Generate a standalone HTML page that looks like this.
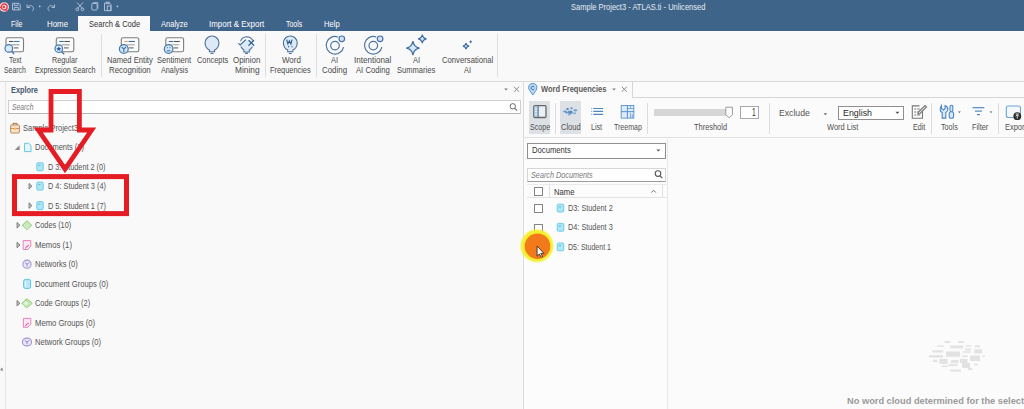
<!DOCTYPE html>
<html><head><meta charset="utf-8"><style>
html,body{margin:0;padding:0;}
body{width:1024px;height:409px;overflow:hidden;position:relative;background:#fbfbfb;font-family:"Liberation Sans",sans-serif;}
.t{position:absolute;white-space:nowrap;line-height:12px;height:12px;transform-origin:0 50%;}
svg{position:absolute;overflow:visible}
</style></head><body>
<div style="position:absolute;left:0px;top:0px;width:1024px;height:31px;background:#3f648a"></div>
<div style="position:absolute;left:78px;top:16px;width:72px;height:15px;background:#f9f9f9"></div>
<div style="position:absolute;left:0px;top:31px;width:1024px;height:50px;background:#f9f9f9"></div>
<div style="position:absolute;left:0px;top:81px;width:1024px;height:1px;background:#d9d9d9"></div>
<div style="position:absolute;left:101px;top:34px;width:1px;height:43px;background:#dedede"></div>
<div style="position:absolute;left:265px;top:34px;width:1px;height:43px;background:#dedede"></div>
<div style="position:absolute;left:316px;top:34px;width:1px;height:43px;background:#dedede"></div>
<div style="position:absolute;left:497px;top:34px;width:1px;height:43px;background:#dedede"></div>
<div style="position:absolute;left:0px;top:82px;width:523px;height:327px;background:#f9f9f9"></div>
<div style="position:absolute;left:524px;top:138px;width:143px;height:271px;background:#fcfcfc"></div>
<div style="position:absolute;left:5px;top:82px;width:1px;height:327px;background:#e4e4e4"></div>
<div style="position:absolute;left:8px;top:100px;width:513px;height:14px;background:#ffffff;border:1px solid #cfcfcf;border-bottom-color:#b5b5b5;box-sizing:border-box"></div>
<div style="position:absolute;left:523px;top:82px;width:1px;height:327px;background:#dcdcdc"></div>
<div style="position:absolute;left:632px;top:97px;width:392px;height:1px;background:#d6d6d6"></div>
<div style="position:absolute;left:524px;top:82px;width:108px;height:15px;background:#fafafa"></div>
<div style="position:absolute;left:632px;top:82px;width:1px;height:16px;background:#d6d6d6"></div>
<div style="position:absolute;left:524px;top:137px;width:500px;height:1px;background:#e0e0e0"></div>
<div style="position:absolute;left:529px;top:101px;width:21px;height:33px;background:#dde1e6"></div>
<div style="position:absolute;left:560px;top:101px;width:21px;height:33px;background:#dde1e6"></div>
<div style="position:absolute;left:555px;top:103px;width:1px;height:31px;background:#dcdcdc"></div>
<div style="position:absolute;left:647px;top:103px;width:1px;height:31px;background:#dcdcdc"></div>
<div style="position:absolute;left:769px;top:103px;width:1px;height:31px;background:#dcdcdc"></div>
<div style="position:absolute;left:931px;top:103px;width:1px;height:31px;background:#dcdcdc"></div>
<div style="position:absolute;left:998px;top:103px;width:1px;height:31px;background:#dcdcdc"></div>
<div style="position:absolute;left:654px;top:109px;width:73px;height:7px;background:#d6d6d6"></div>
<div style="position:absolute;left:740px;top:106px;width:19px;height:13px;background:#ffffff;border:1px solid #a9a9a9;box-sizing:border-box"></div>
<div style="position:absolute;left:838px;top:106px;width:66px;height:14px;background:#ffffff;border:1px solid #8f8f8f;box-sizing:border-box"></div>
<div style="position:absolute;left:667px;top:139px;width:1px;height:270px;background:#e8e8e8"></div>
<div style="position:absolute;left:527px;top:143px;width:139px;height:16px;background:#ffffff;border:1px solid #8f8f8f;box-sizing:border-box"></div>
<div style="position:absolute;left:527px;top:168px;width:139px;height:14px;background:#ffffff;border:1px solid #d6d6d6;border-bottom-color:#9d9d9d;box-sizing:border-box"></div>
<div style="position:absolute;left:527px;top:197px;width:140px;height:1px;background:#e3e3e3"></div>
<div style="position:absolute;left:527px;top:184px;width:140px;height:1px;background:#ebebeb"></div>
<div style="position:absolute;left:549px;top:185px;width:1px;height:12px;background:#e0e0e0"></div>
<div style="position:absolute;left:662px;top:185px;width:1px;height:12px;background:#e0e0e0"></div>
<div style="position:absolute;left:534px;top:187px;width:9px;height:9px;border:1px solid #858585;box-sizing:border-box;background:#fff"></div>
<div style="position:absolute;left:534px;top:204px;width:9px;height:9px;border:1px solid #858585;box-sizing:border-box;background:#fff"></div>
<div style="position:absolute;left:534px;top:224px;width:9px;height:9px;border:1px solid #858585;box-sizing:border-box;background:#fff"></div>
<div style="position:absolute;left:534px;top:243px;width:9px;height:9px;border:1px solid #858585;box-sizing:border-box;background:#fff"></div>
<svg width="1024" height="409" viewBox="0 0 1024 409" style="left:0;top:0">
<!-- ===== title bar quick access ===== -->
<g id="qat">
  <circle cx="4.2" cy="7" r="4.8" fill="#f4d3d8"/>
  <circle cx="4.2" cy="7" r="3" fill="none" stroke="#e4424e" stroke-width="1.3"/>
  <circle cx="3.8" cy="7" r="1.3" fill="#e4424e"/>
  <path d="M0 7.3h1.5M5.8 9.5l1.8 1.8" stroke="#e4424e" stroke-width="1.2"/>
  <g fill="none" stroke="#a9bed6" stroke-width="1">
    <path d="M12.5 3.3h6.5l1.2 1.2v5.4h-7.7z"/>
    <path d="M14.3 3.3v2.3h3.6v-2.3M14.3 9.9v-2.4h4v2.4"/>
    <path d="M27 4.5v3h3" />
    <path d="M27.3 7.3c1.5-2 4.5-2.3 5.8-0.2c0.9 1.5 0.2 3.2-1.2 4"/>
    <path d="M54.5 4.5v3h-3"/>
    <path d="M54.2 7.3c-1.5-2-4.5-2.3-5.8-0.2c-0.9 1.5-0.2 3.2 1.2 4"/>
    <path d="M77 2.5l5.5 6M83 2.5l-5.5 6"/>
    <circle cx="77.3" cy="9.3" r="1.4"/>
    <circle cx="82.5" cy="9.3" r="1.4"/>
    <rect x="91.8" y="3.5" width="5.3" height="6.5" rx="0.6"/>
    <path d="M93.2 3.5v-0.8h4.6v6"/>
    <path d="M106 3h-1.5v7.7h6.5v-6.2l-1.5-1.5h-1.2"/>
    <rect x="106.5" y="2.2" width="2.5" height="1.5"/>
    <rect x="107.3" y="6" width="3.6" height="4.4"/>
  </g>
  <circle cx="39.7" cy="6.3" r="0.9" fill="#b7c9de"/>
  <circle cx="117.4" cy="6.3" r="0.9" fill="#b7c9de"/>
</g>

<!-- ===== ribbon icons ===== -->
<g id="ribbon">
  <!-- doc icons -->
  <g fill="#fbfbfb" stroke="#7d7d7d" stroke-width="1.1">
    <rect x="6" y="37.7" width="17.5" height="14" rx="1.8"/>
    <rect x="56.3" y="37.7" width="17.5" height="14" rx="1.8"/>
    <rect x="121.3" y="37.7" width="17.5" height="14" rx="1.8"/>
    <rect x="165.8" y="37.7" width="17.8" height="14" rx="1.8"/>
  </g>
  <g stroke-width="1.1">
    <path d="M9 41.5h4.5" stroke="#555"/><path d="M14 41.5h5.6" stroke="#3c7fc0"/>
    <path d="M11.5 44.8h8" stroke="#9a9a9a"/><path d="M13.8 47.9h4.7" stroke="#666"/>
    <path d="M59.3 41.5h4.5" stroke="#3c6fa8"/><path d="M64.3 41.5h5.6" stroke="#555"/>
    <path d="M61.8 44.8h8" stroke="#9a9a9a"/><path d="M64 47.9h4.7" stroke="#666"/>
    <path d="M124.3 41.5h3.5" stroke="#e0a070"/><path d="M128.5 41.5h6.4" stroke="#3c6fa8"/>
    <path d="M126.8 44.8h8" stroke="#b0a0a0"/><path d="M129 47.9h4.7" stroke="#666"/>
    <path d="M168.8 41.5h4.5" stroke="#3c6fa8"/><path d="M173.8 41.5h6" stroke="#555"/>
    <path d="M171.3 44.8h8" stroke="#9ab09a"/><path d="M173.5 47.9h4.7" stroke="#666"/>
  </g>
  <!-- magnifiers -->
  <g stroke="#4a79ad" stroke-width="1.2">
    <circle cx="8.8" cy="48.4" r="3.8" fill="#d8eaf9"/>
    <path d="M11.5 51.3l2.7 2.8" stroke-width="1.4"/>
    <circle cx="58.8" cy="48.7" r="3.8" fill="#d8eaf9"/>
    <path d="M61.5 51.6l2.7 2.7" stroke-width="1.4"/>
    <circle cx="123.8" cy="49" r="4.4" fill="#d2e6f8"/>
    <path d="M121.6 47l2.2 2v3M126 47l-2.2 2" fill="none"/>
    <circle cx="168.6" cy="49" r="4.3" fill="#d2e6f8"/>
    <path d="M166.8 50.8h3.6" fill="none"/>
  </g>
  <path d="M58.8 46.3l0.8 1.6 1.7 0.2-1.3 1.2 0.4 1.7-1.6-0.9-1.6 0.9 0.4-1.7-1.3-1.2 1.7-0.2z" fill="#2e5f96"/>
  <g fill="#4a79ad"><circle cx="167.3" cy="47.7" r="0.6"/><circle cx="169.9" cy="47.7" r="0.6"/></g>
  <!-- bulbs -->
  <g fill="#dceaf7" stroke="#4d6f98" stroke-width="1.1">
    <path d="M209.4 51.8v-1.8c-2.6-1.4-4.3-4-4.3-7.1c0-3.9 3.1-6.9 6.9-6.9s6.9 3 6.9 6.9c0 3.1-1.7 5.7-4.3 7.1v1.8z"/>
    <path d="M243.9 52v-2c-1.6-0.9-2.8-2.2-3.4-3.6l1.5-2.6 4.5-4.3 3.2 0.4 3.9 3.6 0.6 1.8c-0.6 2-1.9 3.6-3.6 4.7v2z" stroke="none"/>
    <path d="M240.5 41.2a6.7 6.7 0 0 1 12.3 -0.6" fill="none" stroke="#5a7ea6"/>
    <path d="M240.9 46.6c0.7 1.5 1.7 2.6 3 3.4v2h5.4v-2c1.4-0.9 2.4-2 3-3.4" fill="none"/>
    <path d="M287.7 51.8v-1.8c-2.6-1.4-4.3-4-4.3-7.1c0-3.9 3.1-6.9 6.9-6.9s6.9 3 6.9 6.9c0 3.1-1.7 5.7-4.3 7.1v1.8z"/>
  </g>
  <g stroke="#4d6f98" stroke-width="1.1" fill="none">
    <path d="M210.5 53.4h3"/><path d="M245 53.4h3"/><path d="M288.8 53.4h3"/>
    <path d="M238.4 43.4l1.8 1.6 5.6-5.4" stroke="#41688f" stroke-width="1.2"/>
    <path d="M248.6 40.2l5.6 5.4M254 40.2l-5.6 5.4" stroke="#2f5f90" stroke-width="1.3"/>
    <path d="M286.7 39.6l1.2 4.4 1.5-3.2 1.5 3.2 1.2-4.4" stroke="#2f5a88" stroke-width="1.1"/>
    <path d="M288.6 45.8v1.6M292 45.8v1.6" stroke="#2f5a88" stroke-width="0.9"/>
  </g>
  <!-- AI coding -->
  <g fill="none" stroke="#4d74a0" stroke-width="1.2">
    <path d="M343.6 47.2a8.8 8.8 0 1 1 -5.6 -10.2"/>
    <circle cx="335" cy="45.6" r="4.3"/>
    <circle cx="341.8" cy="38.8" r="2.8" fill="#cfe4f8"/>
    <path d="M381.9 47.2a8.8 8.8 0 1 1 -5.6 -10.2"/>
    <circle cx="373.3" cy="45.6" r="4.3"/>
    <circle cx="380.1" cy="38.8" r="2.8" fill="#cfe4f8"/>
  </g>
  <!-- stars -->
  <g fill="#d6e9f9" stroke="#3f6d9f" stroke-width="1.2">
    <path d="M412.9 41.2q0.9 6 6.6 6.9q-5.7 0.9 -6.6 7q-0.9 -6.1 -6.6 -7q5.7 -0.9 6.6 -6.9z"/>
    <path d="M422.3 34.6q0.6 3.6 4.2 4.2q-3.6 0.6 -4.2 4.3q-0.6 -3.7 -4.2 -4.3q3.6 -0.6 4.2 -4.2z"/>
    <path d="M466 43q0.4 2.7 3.1 3.1q-2.7 0.4 -3.1 3.1q-0.4 -2.7 -3.1 -3.1q2.7 -0.4 3.1 -3.1z"/>
  </g>
  <path d="M470.7 40.3l1.4 1.5-1.4 1.5-1.4-1.5z" fill="#3f6d9f"/>
</g>

<!-- ===== left panel ===== -->
<g id="left">
  <path d="M504.2 88.5h3.6l-1.8 2z" fill="#777"/>
  <path d="M514 86.8l5 5M519 86.8l-5 5" stroke="#8a8a8a" stroke-width="1"/>
  <circle cx="512.8" cy="106.3" r="2.7" fill="none" stroke="#6a6a6a" stroke-width="1"/>
  <path d="M514.8 108.3l2.3 2.3" stroke="#6a6a6a" stroke-width="1.1"/>
  <!-- project icon -->
  <g>
    <rect x="10.6" y="125" width="8.8" height="8" rx="1" fill="#f6e3c8" stroke="#c08a5a" stroke-width="1"/>
    <path d="M13 125v-1.6h4v1.6" fill="none" stroke="#a86e45" stroke-width="1"/>
    <path d="M10.8 128.5h8.4" stroke="#d98a80" stroke-width="1"/>
    <rect x="13.9" y="127.8" width="2.2" height="2" fill="#e7c040"/>
  </g>
  <!-- expand triangles -->
  <path d="M19.6 145.3v4.8h-4.8z" fill="#8a8a8a"/>
  <g fill="#bdbdbd" stroke="#6e6e6e" stroke-width="0.8" stroke-linejoin="round">
    <path d="M29 183.4l3 2.8-3 2.8z"/>
    <path d="M29 202.8l3 2.8-3 2.8z"/>
    <path d="M17 222.5l3 2.8-3 2.8z"/>
    <path d="M17 242.2l3 2.8-3 2.8z"/>
    <path d="M17 300.4l3 2.8-3 2.8z"/>
  </g>
  <!-- documents folder icon -->
  <path d="M24.5 143.3h4.2l2.3 2.3v6h-6.5z" fill="#e4f6fb" stroke="#6cc8e4" stroke-width="1"/>
  <!-- doc icons -->
  <g fill="#ade6f5" stroke="#62c8e6" stroke-width="0.9">
    <rect x="36.8" y="162.8" width="6.4" height="8" rx="1.2"/>
    <rect x="36.8" y="182.1" width="6.4" height="8" rx="1.2"/>
    <rect x="36.8" y="201.6" width="6.4" height="8" rx="1.2"/>
  </g>
  <g stroke="#4a9fc0" stroke-width="0.7"><path d="M38.3 165.3h2.2M38.3 184.6h2.2M38.3 204.1h2.2"/></g>
  <!-- codes -->
  <path d="M27 221l4.5 4.3-4.5 4.3-4.5-4.3z" fill="#e3f3da" stroke="#9dd287" stroke-width="1.1"/>
  <path d="M27 223.5l1.8 1.8-1.8 1.8-1.8-1.8z" fill="none" stroke="#a7d58f" stroke-width="0.8"/>
  <!-- memos -->
  <path d="M23.2 240.6h7.6v5.6l-3 3.3h-4.6z" fill="#fce6f2" stroke="#e585bd" stroke-width="1"/>
  <path d="M25.5 248.5q0.5-2.8 3.5-3" fill="none" stroke="#c8408a" stroke-width="0.9"/>
  <!-- networks -->
  <circle cx="27" cy="264.2" r="4.1" fill="#ebe6f8" stroke="#a294d4" stroke-width="1.1"/>
  <path d="M25 262.5l2 1.7 2.2-1.5M27 264.2v2.2" fill="none" stroke="#8f7fc6" stroke-width="0.9"/>
  <!-- document groups -->
  <rect x="23.6" y="279.3" width="7" height="9.2" rx="2" fill="#b8e6f6" stroke="#5cc4e6" stroke-width="1"/><path d="M25.6 281.5v5" stroke="#e8f8fd" stroke-width="1"/>
  <!-- code groups -->
  <path d="M27 299l5 4.3-5 4.3-5-4.3z" fill="#e3f3da" stroke="#9dd287" stroke-width="1.1"/>
  <path d="M24.6 299l5 4.3-5 4.3" fill="none" stroke="#a7d58f" stroke-width="0.9"/>
  <!-- memo groups -->
  <path d="M23.4 318.4h7.4v5.6l-3 3.3h-4.4z" fill="#fce6f2" stroke="#e585bd" stroke-width="1"/>
  <path d="M25.5 326.2q0.5-2.6 3.3-2.8" fill="none" stroke="#c8408a" stroke-width="0.9"/>
  <!-- network groups -->
  <ellipse cx="27" cy="342" rx="4.6" ry="3.9" fill="#ebe6f8" stroke="#a294d4" stroke-width="1.1"/>
  <path d="M24.8 340.5l2.2 1.5 2.3-1.5M27 342v2.3" fill="none" stroke="#8f7fc6" stroke-width="0.9"/>
  <!-- collapsed side arrow -->
  <path d="M2.6 367.4v4.2l-2.6-2.1z" fill="#8a8a8a"/>
</g>

<!-- ===== right panel ===== -->
<g id="right">
  <!-- pin -->
  <path d="M532.8 95l-3.2-4.6c-0.6-0.9-0.9-1.8-0.9-2.8a4.1 4.1 0 0 1 8.2 0c0 1-0.3 1.9-0.9 2.8z" fill="#b9d8f2" stroke="#5b93cb" stroke-width="1"/>
  <path d="M534.3 87.2a1.7 1.7 0 1 0 0 1.6" fill="none" stroke="#3f78b5" stroke-width="1"/>
  <path d="M612.2 88.6h3.6l-1.8 2z" fill="#7a7a7a"/>
  <path d="M621.8 86.8l5 5M626.8 86.8l-5 5" stroke="#8a8a8a" stroke-width="1"/>
  <!-- scope -->
  <rect x="533.8" y="105.7" width="12.2" height="11.8" rx="1" fill="#e9f1f8" stroke="#666" stroke-width="1.3"/>
  <rect x="534.6" y="106.5" width="3.4" height="10.2" fill="#a9cdef"/>
  <path d="M538.2 106v11.2" stroke="#666" stroke-width="1"/>
  <g stroke="#ffffff" stroke-width="0.8"><path d="M535 109h2M535 111.6h2M535 114.2h2"/></g>
  <!-- cloud -->
  <g fill="#6b9bd0">
    <ellipse cx="565.2" cy="111.4" rx="2.2" ry="1"/>
    <ellipse cx="567.6" cy="109" rx="1.3" ry="0.9" fill="#4f7fb5"/>
    <ellipse cx="571.5" cy="108.2" rx="1.4" ry="1"/>
    <ellipse cx="575.4" cy="110.3" rx="2" ry="1.1"/>
    <ellipse cx="570.3" cy="112.2" rx="2.6" ry="1.7" fill="#5a8cc4"/>
    <ellipse cx="574.6" cy="113.2" rx="1.5" ry="1" fill="#82acd8"/>
    <ellipse cx="569.2" cy="114.6" rx="1.6" ry="0.9" fill="#82acd8"/>
    <ellipse cx="566.7" cy="112.8" rx="1.2" ry="0.8" fill="#4f7fb5"/>
  </g>
  <!-- list -->
  <g stroke="#4d86c0" stroke-width="1.1">
    <path d="M593.3 108.5h9.8M593.3 111.4h9.8M593.3 114.4h9.8"/>
    <path d="M591 108.5h1.2M591 111.4h1.2M591 114.4h1.2" stroke="#8ab6e0"/>
  </g>
  <!-- treemap -->
  <g fill="#dcecf9" stroke="#5b93cb" stroke-width="0.9">
    <rect x="621.2" y="105.5" width="6.2" height="6.2"/>
    <rect x="627.4" y="105.5" width="6.4" height="6.2"/>
    <rect x="621.2" y="111.7" width="6.2" height="6.4"/>
    <rect x="627.4" y="111.7" width="6.4" height="6.4"/>
  </g>
  <path d="M630.5 113v5M632.3 114v4M627.4 108.5h6.4M630.6 105.5v3" stroke="#5b93cb" stroke-width="0.7"/>
  <!-- slider thumb -->
  <path d="M725.8 107.2h6.6v7.6l-3.3 2.9-3.3-2.9z" fill="#fdfdfd" stroke="#9a9a9a" stroke-width="1"/>
  <!-- dropdown arrows -->
  <path d="M823.6 113.2h3.6l-1.8 2z" fill="#666"/>
  <path d="M895.4 111.8h4l-2 2.2z" fill="#555"/>
  <!-- edit -->
  <g fill="none" stroke="#777" stroke-width="1.1">
    <path d="M922.5 109v9.3h-10.2v-12.4h7.2"/>
    <path d="M914.2 109h2M917.2 109h2.5M914.2 112h2M917.2 112h3M914.2 115h2M917.2 115h3"/>
    <path d="M918.5 112l6.5-6.5 1.5 1.5-6.5 6.5-2 0.5z" fill="#eee"/>
  </g>
  <!-- tools -->
  <g fill="#d7e9f8" stroke="#4d86c0" stroke-width="1.1">
    <path d="M941.5 105.5v3l1.8 1.5 1.8-1.5v-3c1.8 0.8 2.8 2.2 2.8 3.8c0 1.5-0.9 2.7-2.1 3.3v5.5h-3.6v-5.5c-1.3-0.6-2.1-1.8-2.1-3.3c0-1.6 0.9-3 1.4-3.8z"/>
    <rect x="950" y="105.3" width="2.8" height="6.5" rx="1.2"/>
    <rect x="949.2" y="111.8" width="4.4" height="6.5" rx="2"/>
  </g>
  <path d="M958 111.4h2.8l-1.4 1.6z" fill="#555"/>
  <!-- filter -->
  <g stroke="#4d86c0" stroke-width="1.2">
    <path d="M972.6 107.7h11.7"/><path d="M975 111.1h6.9"/><path d="M977 114.6h3"/>
  </g>
  <path d="M989.6 111.4h2.8l-1.4 1.6z" fill="#555"/>
  <!-- export -->
  <rect x="1006.3" y="106" width="14.2" height="11.5" rx="2" fill="#f4f8fc" stroke="#6fa3d6" stroke-width="1.1"/>
  <circle cx="1017.3" cy="116.2" r="3.9" fill="#2b2b2b"/>
  <path d="M1017.3 118.6v-3.6M1015.7 116.3l1.6-1.6 1.6 1.6M1015.6 114h3.4" fill="none" stroke="#fff" stroke-width="0.8"/>
  <!-- Documents combo arrow -->
  <path d="M656.4 149.4h4l-2 2.2z" fill="#555"/>
  <!-- search docs magnifier -->
  <circle cx="658" cy="173.6" r="2.8" fill="none" stroke="#555" stroke-width="1.1"/>
  <path d="M660 175.8l2.4 2.4" stroke="#555" stroke-width="1.2"/>
  <!-- Name sort caret -->
  <path d="M651.3 192.6l2.3-2.4 2.3 2.4" fill="none" stroke="#777" stroke-width="1"/>
  <!-- doc icons in list -->
  <g fill="#ade6f5" stroke="#62c8e6" stroke-width="0.9">
    <rect x="557.2" y="204.2" width="6.6" height="7.8" rx="1.2"/>
    <rect x="557.2" y="223.4" width="6.6" height="7.8" rx="1.2"/>
    <rect x="557.2" y="243" width="6.6" height="7.8" rx="1.2"/>
  </g>
  <g stroke="#4a9fc0" stroke-width="0.7"><path d="M558.8 206.8h2.2M558.8 226h2.2M558.8 245.6h2.2"/></g>
</g>
<!-- word cloud placeholder -->
<g id="wc" fill="#e2e2e2">
  <rect x="944.5" y="341" width="5.5" height="2"/>
  <rect x="958.3" y="341" width="5.5" height="2"/>
  <rect x="937" y="345.5" width="7" height="1.3"/>
  <rect x="950.3" y="345.5" width="13" height="2.8"/>
  <rect x="966.2" y="345.2" width="5" height="1.5"/>
  <rect x="975" y="345.3" width="4.8" height="2"/>
  <rect x="965" y="348.5" width="6" height="1.8"/>
  <rect x="932.2" y="350.3" width="11" height="2.2"/>
  <rect x="946" y="351.5" width="14" height="5.2"/>
  <rect x="962.8" y="351.2" width="8" height="1.5"/>
  <rect x="974.2" y="349.3" width="7.8" height="4"/>
  <rect x="929" y="355.2" width="14" height="2.3"/>
  <rect x="962.2" y="355.5" width="5.5" height="1.6"/>
  <rect x="970" y="355.5" width="10" height="5.5"/>
  <rect x="982.5" y="355.6" width="2.5" height="1.5"/>
  <rect x="933" y="359.7" width="4.3" height="2.3"/>
  <rect x="939.5" y="359" width="8" height="5"/>
  <rect x="951" y="360" width="7.5" height="3.2"/>
  <rect x="960" y="359" width="7.5" height="4"/>
  <rect x="941.5" y="365.5" width="6.5" height="1.5"/>
  <rect x="948.5" y="364.2" width="9.2" height="1.8"/>
  <rect x="962" y="363" width="8" height="5"/>
  <rect x="974" y="363.8" width="4" height="1.6"/>
  <rect x="950" y="369.6" width="11" height="2"/>
  <rect x="968" y="368" width="4.2" height="2"/>
</g>
</svg>

<div class="t" style="left:571.25px;top:1.20px;font-size:9px;font-weight:400;color:#e6ecf3;font-style:normal;transform:scaleX(0.835)">Sample Project3 - ATLAS.ti - Unlicensed</div>
<div class="t" style="left:10.90px;top:17.60px;font-size:9px;font-weight:400;color:#ffffff;font-style:normal;transform:scaleX(0.786)">File</div>
<div class="t" style="left:46.90px;top:17.60px;font-size:9px;font-weight:400;color:#ffffff;font-style:normal;transform:scaleX(0.879)">Home</div>
<div class="t" style="left:88.80px;top:17.60px;font-size:9px;font-weight:400;color:#333333;font-style:normal;transform:scaleX(0.839)">Search &amp; Code</div>
<div class="t" style="left:160.70px;top:17.60px;font-size:9px;font-weight:400;color:#ffffff;font-style:normal;transform:scaleX(0.837)">Analyze</div>
<div class="t" style="left:208.60px;top:17.60px;font-size:9px;font-weight:400;color:#ffffff;font-style:normal;transform:scaleX(0.884)">Import &amp; Export</div>
<div class="t" style="left:285.70px;top:17.60px;font-size:9px;font-weight:400;color:#ffffff;font-style:normal;transform:scaleX(0.772)">Tools</div>
<div class="t" style="left:323.80px;top:17.60px;font-size:9px;font-weight:400;color:#ffffff;font-style:normal;transform:scaleX(0.848)">Help</div>
<div class="t" style="left:9.20px;top:54.30px;font-size:9px;font-weight:400;color:#4a4a4a;font-style:normal;transform:scaleX(0.753)">Text</div>
<div class="t" style="left:4.10px;top:64.30px;font-size:9px;font-weight:400;color:#4a4a4a;font-style:normal;transform:scaleX(0.768)">Search</div>
<div class="t" style="left:52.20px;top:54.30px;font-size:9px;font-weight:400;color:#4a4a4a;font-style:normal;transform:scaleX(0.803)">Regular</div>
<div class="t" style="left:34.60px;top:64.30px;font-size:9px;font-weight:400;color:#4a4a4a;font-style:normal;transform:scaleX(0.801)">Expression Search</div>
<div class="t" style="left:106.60px;top:54.30px;font-size:9px;font-weight:400;color:#4a4a4a;font-style:normal;transform:scaleX(0.847)">Named Entity</div>
<div class="t" style="left:109.00px;top:64.30px;font-size:9px;font-weight:400;color:#4a4a4a;font-style:normal;transform:scaleX(0.877)">Recognition</div>
<div class="t" style="left:157.30px;top:54.30px;font-size:9px;font-weight:400;color:#4a4a4a;font-style:normal;transform:scaleX(0.839)">Sentiment</div>
<div class="t" style="left:160.60px;top:64.30px;font-size:9px;font-weight:400;color:#4a4a4a;font-style:normal;transform:scaleX(0.806)">Analysis</div>
<div class="t" style="left:196.70px;top:54.30px;font-size:9px;font-weight:400;color:#4a4a4a;font-style:normal;transform:scaleX(0.818)">Concepts</div>
<div class="t" style="left:232.90px;top:54.30px;font-size:9px;font-weight:400;color:#4a4a4a;font-style:normal;transform:scaleX(0.883)">Opinion</div>
<div class="t" style="left:234.50px;top:64.30px;font-size:9px;font-weight:400;color:#4a4a4a;font-style:normal;transform:scaleX(0.928)">Mining</div>
<div class="t" style="left:281.50px;top:54.30px;font-size:9px;font-weight:400;color:#4a4a4a;font-style:normal;transform:scaleX(0.881)">Word</div>
<div class="t" style="left:270.30px;top:64.30px;font-size:9px;font-weight:400;color:#4a4a4a;font-style:normal;transform:scaleX(0.820)">Frequencies</div>
<div class="t" style="left:331.18px;top:54.30px;font-size:9px;font-weight:400;color:#4a4a4a;font-style:normal;transform:scaleX(0.830)">AI</div>
<div class="t" style="left:322.30px;top:64.30px;font-size:9px;font-weight:400;color:#4a4a4a;font-style:normal;transform:scaleX(0.880)">Coding</div>
<div class="t" style="left:354.00px;top:54.30px;font-size:9px;font-weight:400;color:#4a4a4a;font-style:normal;transform:scaleX(0.898)">Intentional</div>
<div class="t" style="left:355.70px;top:64.30px;font-size:9px;font-weight:400;color:#4a4a4a;font-style:normal;transform:scaleX(0.853)">AI Coding</div>
<div class="t" style="left:412.88px;top:54.30px;font-size:9px;font-weight:400;color:#4a4a4a;font-style:normal;transform:scaleX(0.830)">AI</div>
<div class="t" style="left:397.20px;top:64.30px;font-size:9px;font-weight:400;color:#4a4a4a;font-style:normal;transform:scaleX(0.839)">Summaries</div>
<div class="t" style="left:441.90px;top:54.30px;font-size:9px;font-weight:400;color:#4a4a4a;font-style:normal;transform:scaleX(0.855)">Conversational</div>
<div class="t" style="left:464.18px;top:64.30px;font-size:9px;font-weight:400;color:#4a4a4a;font-style:normal;transform:scaleX(0.830)">AI</div>
<div class="t" style="left:11.00px;top:84.30px;font-size:9px;font-weight:700;color:#46586e;font-style:normal;transform:scaleX(0.815)">Explore</div>
<div class="t" style="left:11.80px;top:101.00px;font-size:8.5px;font-weight:400;color:#7a7a7a;font-style:italic;transform:scaleX(0.798)">Search</div>
<div class="t" style="left:22.50px;top:122.00px;font-size:9px;font-weight:400;color:#555555;font-style:normal;transform:scaleX(0.833)">Sample Project3</div>
<div class="t" style="left:35.00px;top:141.00px;font-size:9px;font-weight:400;color:#555555;font-style:normal;transform:scaleX(0.830)">Documents (3)</div>
<div class="t" style="left:47.50px;top:161.00px;font-size:9px;font-weight:400;color:#555555;font-style:normal;transform:scaleX(0.809)">D 3: Student 2 (0)</div>
<div class="t" style="left:47.50px;top:180.30px;font-size:9px;font-weight:400;color:#555555;font-style:normal;transform:scaleX(0.816)">D 4: Student 3 (4)</div>
<div class="t" style="left:47.50px;top:199.70px;font-size:9px;font-weight:400;color:#555555;font-style:normal;transform:scaleX(0.816)">D 5: Student 1 (7)</div>
<div class="t" style="left:34.90px;top:219.30px;font-size:9px;font-weight:400;color:#555555;font-style:normal;transform:scaleX(0.813)">Codes (10)</div>
<div class="t" style="left:34.90px;top:239.00px;font-size:9px;font-weight:400;color:#555555;font-style:normal;transform:scaleX(0.860)">Memos (1)</div>
<div class="t" style="left:34.90px;top:258.30px;font-size:9px;font-weight:400;color:#555555;font-style:normal;transform:scaleX(0.839)">Networks (0)</div>
<div class="t" style="left:35.20px;top:278.00px;font-size:9px;font-weight:400;color:#555555;font-style:normal;transform:scaleX(0.847)">Document Groups (0)</div>
<div class="t" style="left:35.20px;top:297.30px;font-size:9px;font-weight:400;color:#555555;font-style:normal;transform:scaleX(0.822)">Code Groups (2)</div>
<div class="t" style="left:35.20px;top:316.80px;font-size:9px;font-weight:400;color:#555555;font-style:normal;transform:scaleX(0.851)">Memo Groups (0)</div>
<div class="t" style="left:35.20px;top:336.00px;font-size:9px;font-weight:400;color:#555555;font-style:normal;transform:scaleX(0.841)">Network Groups (0)</div>
<div class="t" style="left:540.60px;top:83.20px;font-size:9px;font-weight:700;color:#5a5a5a;font-style:normal;transform:scaleX(0.835)">Word Frequencies</div>
<div class="t" style="left:529.90px;top:121.30px;font-size:9px;font-weight:400;color:#505050;font-style:normal;transform:scaleX(0.788)">Scope</div>
<div class="t" style="left:560.60px;top:121.30px;font-size:9px;font-weight:400;color:#505050;font-style:normal;transform:scaleX(0.838)">Cloud</div>
<div class="t" style="left:591.00px;top:121.30px;font-size:9px;font-weight:400;color:#505050;font-style:normal;transform:scaleX(0.793)">List</div>
<div class="t" style="left:614.00px;top:121.30px;font-size:9px;font-weight:400;color:#505050;font-style:normal;transform:scaleX(0.779)">Treemap</div>
<div class="t" style="left:694.40px;top:121.30px;font-size:9px;font-weight:400;color:#505050;font-style:normal;transform:scaleX(0.825)">Threshold</div>
<div class="t" style="left:751.50px;top:106.50px;font-size:10px;font-weight:400;color:#333333;font-style:normal;transform:scaleX(0.667)">1</div>
<div class="t" style="left:779.00px;top:106.60px;font-size:9px;font-weight:400;color:#555555;font-style:normal;transform:scaleX(0.962)">Exclude</div>
<div class="t" style="left:842.80px;top:106.70px;font-size:9px;font-weight:400;color:#2a2a2a;font-style:normal;transform:scaleX(0.983)">English</div>
<div class="t" style="left:826.80px;top:121.30px;font-size:9px;font-weight:400;color:#505050;font-style:normal;transform:scaleX(0.829)">Word List</div>
<div class="t" style="left:913.00px;top:121.30px;font-size:9px;font-weight:400;color:#505050;font-style:normal;transform:scaleX(0.793)">Edit</div>
<div class="t" style="left:940.60px;top:121.30px;font-size:9px;font-weight:400;color:#505050;font-style:normal;transform:scaleX(0.795)">Tools</div>
<div class="t" style="left:972.30px;top:121.30px;font-size:9px;font-weight:400;color:#505050;font-style:normal;transform:scaleX(0.815)">Filter</div>
<div class="t" style="left:1004.60px;top:121.30px;font-size:9px;font-weight:400;color:#505050;font-style:normal;transform:scaleX(0.830)">Export</div>
<div class="t" style="left:531.60px;top:144.30px;font-size:9px;font-weight:400;color:#333333;font-style:normal;transform:scaleX(0.852)">Documents</div>
<div class="t" style="left:531.00px;top:169.00px;font-size:8.5px;font-weight:400;color:#7a7a7a;font-style:italic;transform:scaleX(0.854)">Search Documents</div>
<div class="t" style="left:553.50px;top:185.50px;font-size:9px;font-weight:400;color:#333333;font-style:normal;transform:scaleX(0.854)">Name</div>
<div class="t" style="left:567.50px;top:202.00px;font-size:9px;font-weight:400;color:#555555;font-style:normal;transform:scaleX(0.812)">D3: Student 2</div>
<div class="t" style="left:567.50px;top:221.20px;font-size:9px;font-weight:400;color:#555555;font-style:normal;transform:scaleX(0.812)">D4: Student 3</div>
<div class="t" style="left:567.50px;top:240.70px;font-size:9px;font-weight:400;color:#555555;font-style:normal;transform:scaleX(0.781)">D5: Student 1</div>
<div class="t" style="left:846.70px;top:394.60px;font-size:9.5px;font-weight:700;color:#9a9a9a;font-style:normal;transform:scaleX(0.975)">No word cloud determined for the select</div>
<svg width="1024" height="409" viewBox="0 0 1024 409" style="left:0;top:0">
  <!-- red arrow -->
  <path d="M51 91.5H79.4V130H91.7L65 169L38.3 130H51Z" fill="none" stroke="#e51c24" stroke-width="4.8" stroke-linejoin="miter" stroke-miterlimit="10"/>
  <!-- red box -->
  <rect x="14.5" y="176.6" width="112" height="37" fill="none" stroke="#e51c24" stroke-width="5"/>
  <!-- cursor highlight -->
  <defs><radialGradient id="glow" cx="0.5" cy="0.5" r="0.5">
    <stop offset="0.7" stop-color="#f4f02a" stop-opacity="1"/>
    <stop offset="0.86" stop-color="#f4f02a" stop-opacity="0.95"/>
    <stop offset="1" stop-color="#f4f02a" stop-opacity="0"/></radialGradient></defs>
  <circle cx="537" cy="245.8" r="17.5" fill="url(#glow)"/>
  <circle cx="537.5" cy="246.2" r="12.8" fill="#f27a1a"/>
  <!-- mouse cursor -->
  <path d="M537.1 246v10.2l2.3-2.2 1.7 3.2 1.4-0.7-1.7-3.1h3.1z" fill="#ffffff" stroke="#222" stroke-width="0.8" stroke-linejoin="round"/>
</svg>

</body></html>
